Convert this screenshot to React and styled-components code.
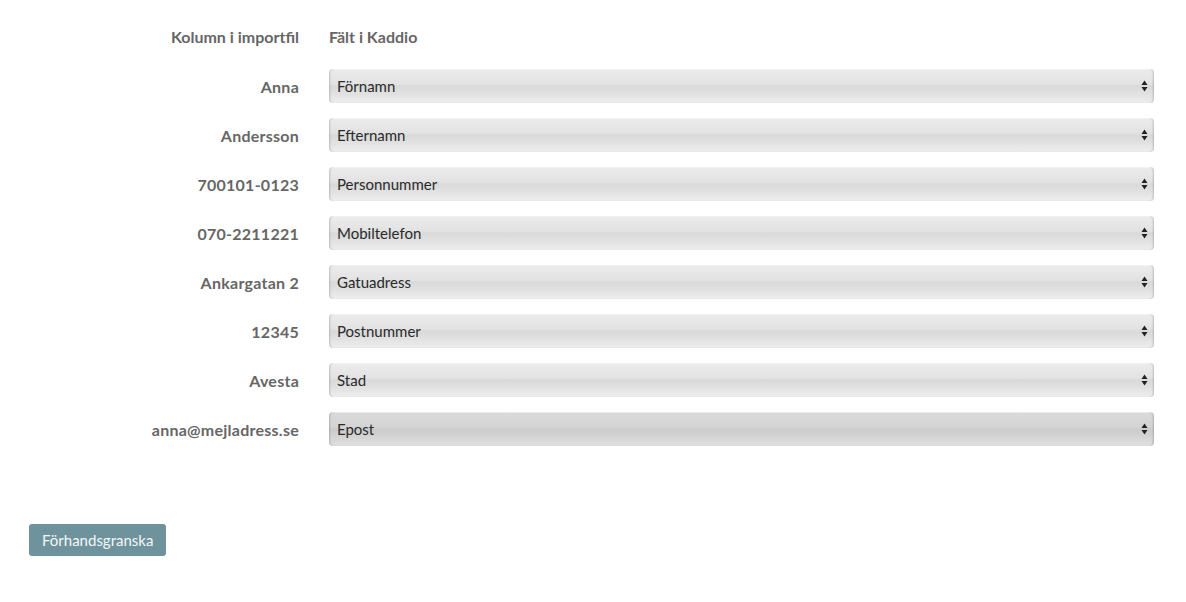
import { useState } from "react";
import styled, { createGlobalStyle } from "styled-components";

const GlobalStyle = createGlobalStyle`
  body {
    margin: 0;
    background: #fff;
    font-family: Lato, "Open Sans", sans-serif;
  }
`;

const fields = [
  "Förnamn",
  "Efternamn",
  "Personnummer",
  "Mobiltelefon",
  "Gatuadress",
  "Postnummer",
  "Stad",
  "Epost",
];

const rows = [
  { value: "Anna", field: "Förnamn" },
  { value: "Andersson", field: "Efternamn" },
  { value: "700101-0123", field: "Personnummer" },
  { value: "070-2211221", field: "Mobiltelefon" },
  { value: "Ankargatan 2", field: "Gatuadress" },
  { value: "12345", field: "Postnummer" },
  { value: "Avesta", field: "Stad" },
  { value: "anna@mejladress.se", field: "Epost", active: true },
];

function Arrows() {
  return (
    <svg width="7" height="12" viewBox="0 0 7 12">
      <path d="M3.5 0.5 L6.5 5 L0.5 5 Z" fill="#222" />
      <path d="M3.5 11.5 L6.5 7 L0.5 7 Z" fill="#222" />
    </svg>
  );
}

function App() {
  const [map, setMap] = useState(rows.map((r) => r.field));
  return (
    <Page>
      <GlobalStyle />
      <MapGrid>
        <HeadLabel>Kolumn i importfil</HeadLabel>
        <HeadField>Fält i Kaddio</HeadField>
        {rows.map((r, i) => (
          <Row key={r.value}>
            <Label>{r.value}</Label>
            <SelectWrap>
              <Select
                $active={r.active}
                value={map[i]}
                onChange={(e) => {
                  const next = [...map];
                  next[i] = e.target.value;
                  setMap(next);
                }}
              >
                {fields.map((f) => (
                  <option key={f}>{f}</option>
                ))}
              </Select>
              <ArrowBox>
                <Arrows />
              </ArrowBox>
            </SelectWrap>
          </Row>
        ))}
      </MapGrid>
      <Actions>
        <PreviewBtn>Förhandsgranska</PreviewBtn>
      </Actions>
    </Page>
  );
}

export default App;

/* --- styled-components --- */

const Page = styled.div`
  padding: 20px 32px 40px 29px;
`;

const MapGrid = styled.div`
  display: grid;
  grid-template-columns: 270px 1fr;
  column-gap: 30px;
  row-gap: 15px;
  grid-auto-rows: 34px;
`;

const Row = styled.div`
  display: contents;
`;

const HeadLabel = styled.div`
  display: flex;
  align-items: center;
  justify-content: flex-end;
  font-size: 16px;
  font-weight: 700;
  letter-spacing: 0;
  color: #666;
  padding-bottom: 2px;
`;

const HeadField = styled(HeadLabel)`
  justify-content: flex-start;
`;

const Label = styled.div`
  display: flex;
  align-items: center;
  justify-content: flex-end;
  font-size: 16px;
  font-weight: 700;
  letter-spacing: 0.25px;
  color: #666;
`;

const SelectWrap = styled.div`
  position: relative;
  height: 34px;
`;

const Select = styled.select`
  appearance: none;
  -webkit-appearance: none;
  width: 100%;
  height: 34px;
  border: none;
  border-radius: 4px;
  padding: 0 24px 0 8px;
  font-family: Lato, "Open Sans", sans-serif;
  font-size: 15px;
  color: #2a2a2a;
  outline: none;
  cursor: pointer;
  background: ${(p) =>
    p.$active
      ? "linear-gradient(#dadada 0%, #d3d3d3 45%, #cbcbcb 50%, #d5d5d5 75%, #e0e0e0 100%)"
      : "linear-gradient(#ececec 0%, #e2e2e2 45%, #d9d9d9 50%, #e2e2e2 75%, #eeeeee 100%)"};
  box-shadow: inset 2px 0 2px -1px rgba(0, 0, 0, 0.18),
    inset -2px 0 2px -1px rgba(0, 0, 0, 0.18),
    inset 0 1px 0 rgba(255, 255, 255, 0.5);
`;

const ArrowBox = styled.span`
  position: absolute;
  right: 6px;
  top: 11px;
  pointer-events: none;
  display: flex;
`;

const Actions = styled.div`
  margin-top: 78px;
  display: flex;
`;

const PreviewBtn = styled.button`
  background: #6e939d;
  color: #f4f7f8;
  border: none;
  border-radius: 3px;
  height: 32px;
  padding: 0 13px;
  font-family: Lato, "Open Sans", sans-serif;
  font-size: 15px;
  cursor: pointer;
  &:hover {
    background: #5d818b;
  }
`;
